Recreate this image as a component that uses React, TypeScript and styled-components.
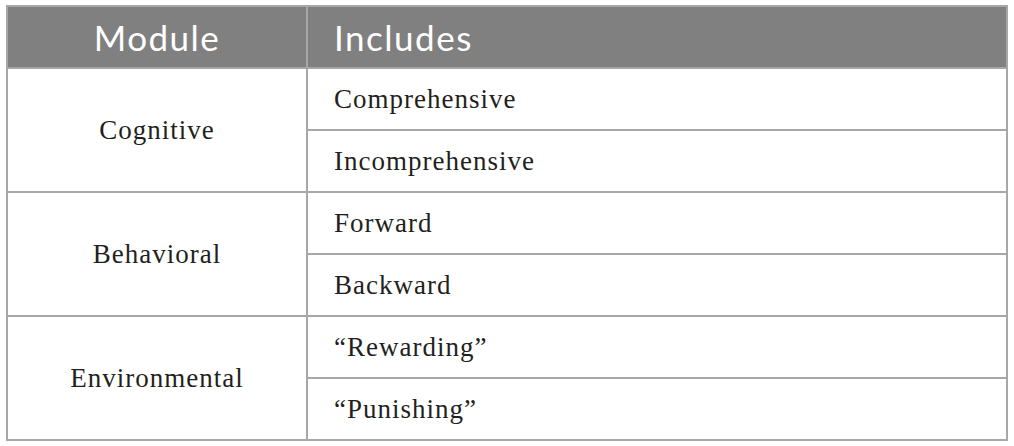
import React from "react";
import styled, { createGlobalStyle } from "styled-components";

const Global = createGlobalStyle`
  html, body { margin: 0; padding: 0; background: #ffffff; }
  body { padding: 5px 0 0 6px; }
`;

const Table = styled.table`
  border-collapse: collapse;
  width: 1002px;
  table-layout: fixed;
  border: 2px solid #a7a7a7;
`;

const HeadCell = styled.th<{ $center?: boolean }>`
  background: #808080;
  color: #ffffff;
  font-family: "Lato", "Open Sans", sans-serif;
  font-weight: 400;
  font-size: 35px;
  letter-spacing: 1.5px;
  height: 60px;
  padding: 0 0 0 ${(p) => (p.$center ? "0" : "26px")};
  text-align: ${(p) => (p.$center ? "center" : "left")};
  border: 2px solid #a7a7a7;
  box-sizing: content-box;
`;

const Cell = styled.td<{ $center?: boolean }>`
  font-family: "Liberation Serif", "Times New Roman", serif;
  font-size: 27px;
  letter-spacing: 1px;
  color: #231f20;
  height: 60px;
  padding: 0 0 0 ${(p) => (p.$center ? "0" : "26px")};
  text-align: ${(p) => (p.$center ? "center" : "left")};
  vertical-align: middle;
  border: 2px solid #a7a7a7;
  box-sizing: content-box;
`;

const data = [
  { module: "Cognitive", items: ["Comprehensive", "Incomprehensive"] },
  { module: "Behavioral", items: ["Forward", "Backward"] },
  { module: "Environmental", items: ["\u201cRewarding\u201d", "\u201cPunishing\u201d"] },
];

export default function App() {
  return (
    <>
      <Global />
      <Table>
        <colgroup>
          <col style={{ width: 300 }} />
          <col />
        </colgroup>
        <thead>
          <tr>
            <HeadCell $center>Module</HeadCell>
            <HeadCell>Includes</HeadCell>
          </tr>
        </thead>
        <tbody>
          {data.map((g) =>
            g.items.map((it, i) => (
              <tr key={g.module + i}>
                {i === 0 && (
                  <Cell $center rowSpan={g.items.length}>
                    {g.module}
                  </Cell>
                )}
                <Cell>{it}</Cell>
              </tr>
            ))
          )}
        </tbody>
      </Table>
    </>
  );
}
